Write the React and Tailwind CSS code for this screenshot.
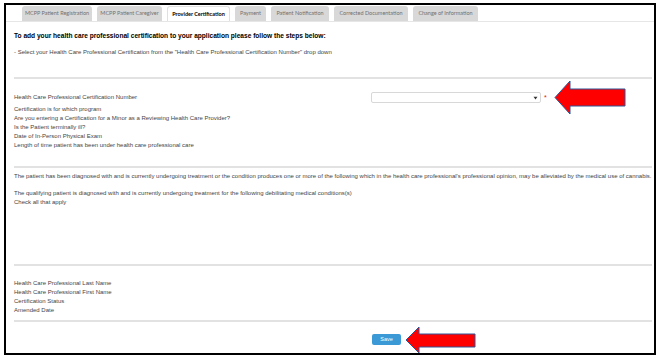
import React from "react";

const tabs = [
  { label: "MCPP Patient Registration", w: "w-[70px]" },
  { label: "MCPP Patient Caregiver", w: "w-[65px]" },
  { label: "Provider Certification", w: "w-[63px]", active: true },
  { label: "Payment", w: "w-[31px]" },
  { label: "Patient Notification", w: "w-[58px]" },
  { label: "Corrected Documentation", w: "w-[74px]" },
  { label: "Change of Information", w: "w-[65px]" },
];

function Hr({ className = "" }) {
  return <div className={"h-[2px] bg-[#e2e2e2] mr-[2px] " + className} />;
}

export default function App() {
  return (
    <div
      className="relative w-[662px] h-[359px] bg-white pt-[3px] pl-[4px] overflow-hidden"
      style={{ fontFamily: '"Liberation Sans", Arial, sans-serif' }}
    >
      <div className="w-[652px] h-[352px] border-2 border-black flex flex-col text-[6px] leading-[9px] text-[#444]">
        {/* tabs */}
        <div className="mt-[1px] flex items-end gap-[5px] pl-[16px] border-b border-[#e6e6e6] h-[16px]">
          {tabs.map((t) => (
            <div
              key={t.label}
              className={
                t.w +
                " h-[15px] flex items-center justify-center rounded-t-[3px] text-[5.5px] whitespace-nowrap " +
                (t.active
                  ? "bg-white border border-b-0 border-[#e0e0e0] text-black font-bold"
                  : "bg-[#d8d8d8] text-[#707070]")
              }
              style={{ fontFamily: 'Lato, "Open Sans", sans-serif' }}
            >
              {t.label}
            </div>
          ))}
        </div>

        <div className="pl-[8px] flex flex-col">
          <div className="mt-[9px] font-bold text-black text-[6.6px]">
            To add your health care professional certification to your application please follow the steps below:
          </div>
          <div className="mt-[8px]">
            - Select your Health Care Professional Certification from the "Health Care Professional Certification Number" drop down
          </div>

          <Hr className="mt-[20px]" />

          <div className="mt-[13px] flex items-center h-[11px]">
            <div className="w-[357px]">Health Care Professional Certification Number</div>
            <div className="w-[170px] h-[11px] border border-[#d8d8d8] rounded-[2px] bg-white flex items-center justify-end pr-[2px]">
              <svg width="5" height="4" viewBox="0 0 5 4">
                <path d="M0.5 0.8 L4.5 0.8 L2.5 3.4 Z" fill="#333" />
              </svg>
            </div>
            <span className="ml-[3px] text-[#e02020] text-[7px] leading-[9px]">*</span>
          </div>

          <div className="mt-[1.5px] flex flex-col">
            <div>Certification is for which program</div>
            <div>Are you entering a Certification for a Minor as a Reviewing Health Care Provider?</div>
            <div>Is the Patient terminally ill?</div>
            <div>Date of In-Person Physical Exam</div>
            <div>Length of time patient has been under health care professional care</div>
          </div>

          <Hr className="mt-[16.5px]" />

          <div className="mt-[4px] whitespace-nowrap">
            The patient has been diagnosed with and is currently undergoing treatment or the condition produces one or more of the following which in the health care professional's professional opinion, may be alleviated by the medical use of cannabis.
          </div>
          <div className="mt-[8px]">
            The qualifying patient is diagnosed with and is currently undergoing treatment for the following debilitating medical conditions(s)
          </div>
          <div>Check all that apply</div>

          <Hr className="mt-[57px]" />

          <div className="mt-[12.5px] flex flex-col">
            <div>Health Care Professional Last Name</div>
            <div>Health Care Professional First Name</div>
            <div>Certification Status</div>
            <div>Amended Date</div>
          </div>

          <Hr className="mt-[5.5px]" />

          <div className="mt-[12px] flex">
            <button className="ml-[358px] w-[29px] h-[11px] rounded-[2px] bg-[#3b9ad6] text-white text-[5.5px] leading-[11px] flex items-center justify-center">
              Save
            </button>
          </div>
        </div>
      </div>

      <svg
        className="absolute left-0 top-0 pointer-events-none"
        width="662"
        height="359"
        viewBox="0 0 662 359"
      >
        <polygon
          points="555,97.5 570,81 570,89 625,89 625,106 570,106 570,114"
          fill="#ff0000"
          stroke="#2f5597"
          strokeWidth="1"
        />
        <polygon
          points="406,340 419,327 419,334 475,334 475,347 419,347 419,353"
          fill="#ff0000"
          stroke="#2f5597"
          strokeWidth="1"
        />
      </svg>
    </div>
  );
}
